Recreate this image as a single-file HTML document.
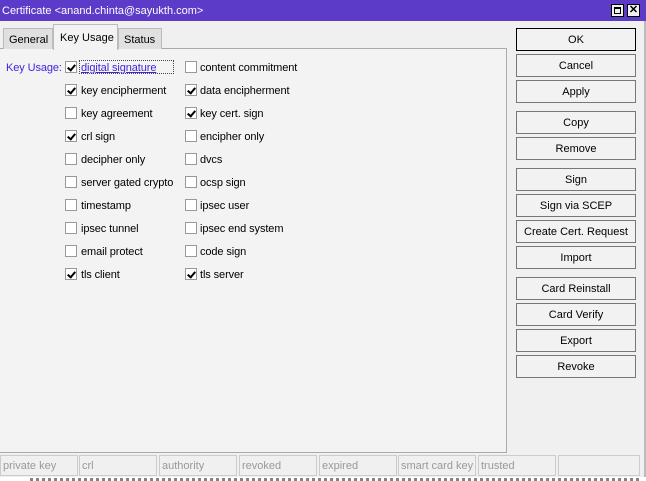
<!DOCTYPE html>
<html><head><style>
*{margin:0;padding:0;box-sizing:border-box}
body{width:646px;height:481px;background:#f0f0f0;font-family:"Liberation Sans",sans-serif;font-size:11px;color:#000;position:relative;overflow:hidden}
.a{position:absolute}
.title{left:0;top:0;width:646px;height:21px;background:#5c3bc8;color:#fff;font-size:11px;line-height:23px;padding-left:2px}
.wb{top:4px;width:13px;height:13px;background:#f0f0f0;border:1px solid #000}
.tab{top:28px;height:21px;background:#e0e0e0;border:1px solid #bbb;border-bottom:none;line-height:22px;padding-left:5px}
.btn{left:516px;width:120px;height:23px;border:1px solid #777;background:#f2f2f2;text-align:center;line-height:23px}
.cb{width:12px;height:12px;border:1px solid #999;background:#fff}
.lbl{line-height:14px;top:0;letter-spacing:-0.1px}
.ck::after{content:"";position:absolute;left:3px;top:1px;width:3px;height:6px;border:solid #000;border-width:0 2px 2px 0;transform:rotate(40deg)}
.sf{top:455px;height:21px;width:78px;border:1px solid #ccc;color:#999;line-height:21px;padding-left:2px}
</style></head><body>
<div class="a title">Certificate &lt;anand.chinta@sayukth.com&gt;</div>
<div class="a wb" style="left:611px"><div class="a" style="left:2px;top:2px;width:7px;height:7px;border:1px solid #000;border-top-width:2px"></div></div>
<div class="a wb" style="left:627px;font-weight:bold;font-size:11px;line-height:11px;text-align:center">✕</div>
<div class="a" style="left:644px;top:21px;width:2px;height:460px;background:#bbb"></div>
<div class="a" style="left:0;top:48px;width:507px;height:405px;border:1px solid #aaa;border-left:none;background:#f3f3f3"></div>
<div class="a tab" style="left:3px;width:50px">General</div>
<div class="a tab" style="left:118px;width:44px">Status</div>
<div class="a tab" style="left:53px;top:24px;height:26px;width:65px;background:#f3f3f3;line-height:26px;padding-left:6px">Key Usage</div>

<div style="position:absolute;left:0;top:1px;width:510px;height:300px">
<div class="a lbl" style="left:6px;top:60px;color:#4422dd">Key Usage:</div>
<div class="a" style="left:79px;top:59px;width:95px;height:14px;border:1px dotted #444"></div>

<div class="a cb ck" style="left:65px;top:60px"></div><div class="a lbl" style="left:81px;top:60px;color:#4422dd;text-decoration:underline">digital signature</div>
<div class="a cb ck" style="left:65px;top:83px"></div><div class="a lbl" style="left:81px;top:83px">key encipherment</div>
<div class="a cb" style="left:65px;top:106px"></div><div class="a lbl" style="left:81px;top:106px">key agreement</div>
<div class="a cb ck" style="left:65px;top:129px"></div><div class="a lbl" style="left:81px;top:129px">crl sign</div>
<div class="a cb" style="left:65px;top:152px"></div><div class="a lbl" style="left:81px;top:152px">decipher only</div>
<div class="a cb" style="left:65px;top:175px"></div><div class="a lbl" style="left:81px;top:175px">server gated crypto</div>
<div class="a cb" style="left:65px;top:198px"></div><div class="a lbl" style="left:81px;top:198px">timestamp</div>
<div class="a cb" style="left:65px;top:221px"></div><div class="a lbl" style="left:81px;top:221px">ipsec tunnel</div>
<div class="a cb" style="left:65px;top:244px"></div><div class="a lbl" style="left:81px;top:244px">email protect</div>
<div class="a cb ck" style="left:65px;top:267px"></div><div class="a lbl" style="left:81px;top:267px">tls client</div>

<div class="a cb" style="left:185px;top:60px"></div><div class="a lbl" style="left:200px;top:60px">content commitment</div>
<div class="a cb ck" style="left:185px;top:83px"></div><div class="a lbl" style="left:200px;top:83px">data encipherment</div>
<div class="a cb ck" style="left:185px;top:106px"></div><div class="a lbl" style="left:200px;top:106px">key cert. sign</div>
<div class="a cb" style="left:185px;top:129px"></div><div class="a lbl" style="left:200px;top:129px">encipher only</div>
<div class="a cb" style="left:185px;top:152px"></div><div class="a lbl" style="left:200px;top:152px">dvcs</div>
<div class="a cb" style="left:185px;top:175px"></div><div class="a lbl" style="left:200px;top:175px">ocsp sign</div>
<div class="a cb" style="left:185px;top:198px"></div><div class="a lbl" style="left:200px;top:198px">ipsec user</div>
<div class="a cb" style="left:185px;top:221px"></div><div class="a lbl" style="left:200px;top:221px">ipsec end system</div>
<div class="a cb" style="left:185px;top:244px"></div><div class="a lbl" style="left:200px;top:244px">code sign</div>
<div class="a cb ck" style="left:185px;top:267px"></div><div class="a lbl" style="left:200px;top:267px">tls server</div>
</div>

<div class="a btn" style="top:28px;border-color:#000">OK</div>
<div class="a btn" style="top:54px">Cancel</div>
<div class="a btn" style="top:80px">Apply</div>
<div class="a btn" style="top:111px">Copy</div>
<div class="a btn" style="top:137px">Remove</div>
<div class="a btn" style="top:168px">Sign</div>
<div class="a btn" style="top:194px">Sign via SCEP</div>
<div class="a btn" style="top:220px">Create Cert. Request</div>
<div class="a btn" style="top:246px">Import</div>
<div class="a btn" style="top:277px">Card Reinstall</div>
<div class="a btn" style="top:303px">Card Verify</div>
<div class="a btn" style="top:329px">Export</div>
<div class="a btn" style="top:355px">Revoke</div>

<div class="a sf" style="left:0">private key</div>
<div class="a sf" style="left:79px">crl</div>
<div class="a sf" style="left:159px">authority</div>
<div class="a sf" style="left:239px">revoked</div>
<div class="a sf" style="left:319px">expired</div>
<div class="a sf" style="left:398px">smart card key</div>
<div class="a sf" style="left:478px">trusted</div>
<div class="a sf" style="left:558px;width:82px"></div>
<div class="a" style="left:0;top:477px;width:646px;height:4px;background:#fff"></div>
<div class="a" style="left:30px;top:478px;width:610px;height:3px;background:repeating-linear-gradient(90deg,#333 0 3px,transparent 3px 6px);opacity:.6"></div>
</body></html>
